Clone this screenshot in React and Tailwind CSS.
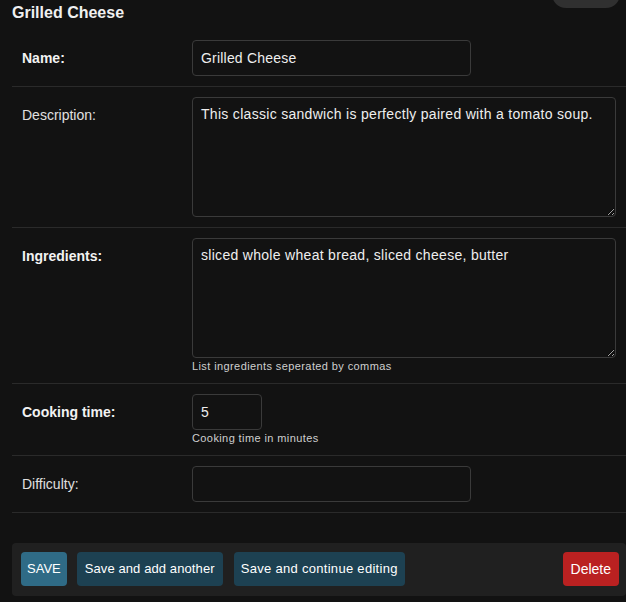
import React from "react";

const font = { fontFamily: '"Liberation Sans", Arial, sans-serif' };

function Row({ label, bold, children, help }) {
  return (
    <div className="flex items-start border-b border-[#2a2a2a] pl-[10px] pr-[10px] pt-[10px] pb-[10px]">
      <label
        className={`w-[170px] shrink-0 h-[36px] leading-[37px] text-[14px] ${
          bold ? "font-bold text-[#f2f2f2]" : "text-[#e0e0e0]"
        }`}
      >
        {label}
      </label>
      <div className="flex flex-col">
        {children}
        {help && (
          <div className="mt-[2px] text-[11px] leading-[13px] tracking-[0.4px] text-[#cfcfcf]">
            {help}
          </div>
        )}
      </div>
    </div>
  );
}

export default function App() {
  return (
    <div
      className="relative h-[602px] w-[626px] overflow-hidden bg-[#121212] text-[#eeeeee] [color-scheme:dark]"
      style={font}
    >
      {/* object tools pill, cut off at the top */}
      <div className="absolute right-[6px] top-[-22px] h-[30px] w-[68px] rounded-[14px] bg-[#303030]" />

      <div className="pl-[12px]">
        <h2 className="pt-[3px] text-[16px] leading-[20px] font-bold text-[#f0f0f0]">
          Grilled Cheese
        </h2>

        <div className="mt-[7px]">
          <Row label="Name:" bold>
            <input
              readOnly
              value="Grilled Cheese"
              className="h-[36px] w-[279px] rounded-[4px] border border-[#3a3a3a] bg-[#121212] px-[8px] text-[14px] tracking-[0.2px] text-[#eeeeee] outline-none"
            />
          </Row>
          <Row label="Description:">
            <textarea
              readOnly
              value="This classic sandwich is perfectly paired with a tomato soup."
              className="h-[120px] w-[424px] rounded-[4px] border border-[#3a3a3a] bg-[#121212] px-[8px] py-[7px] text-[14px] leading-[18px] tracking-[0.3px] text-[#eeeeee] outline-none"
            />
          </Row>
          <Row label="Ingredients:" bold help="List ingredients seperated by commas">
            <textarea
              readOnly
              value="sliced whole wheat bread, sliced cheese, butter"
              className="h-[120px] w-[424px] rounded-[4px] border border-[#3a3a3a] bg-[#121212] px-[8px] py-[7px] text-[14px] leading-[18px] tracking-[0.3px] text-[#eeeeee] outline-none"
            />
          </Row>
          <Row label="Cooking time:" bold help="Cooking time in minutes">
            <input
              readOnly
              value="5"
              className="h-[36px] w-[70px] rounded-[4px] border border-[#3a3a3a] bg-[#121212] px-[8px] text-[14px] text-[#eeeeee] outline-none"
            />
          </Row>
          <Row label="Difficulty:">
            <input
              readOnly
              value=""
              className="h-[36px] w-[279px] rounded-[4px] border border-[#3a3a3a] bg-[#121212] px-[8px] text-[14px] text-[#eeeeee] outline-none"
            />
          </Row>
        </div>

        <div className="mt-[30px] flex items-center gap-[10px] rounded-[4px] bg-[#202020] pl-[9px] pr-[7px] pt-[9px] pb-[10px]">
          <button className="h-[34px] rounded-[4px] bg-[#2f6b86] px-[6px] text-[13px] text-white">
            SAVE
          </button>
          <button className="h-[34px] rounded-[4px] bg-[#1d4152] px-[8px] text-[13px] tracking-[0.1px] text-white">
            Save and add another
          </button>
          <button className="ml-[1px] h-[34px] rounded-[4px] bg-[#1d4152] px-[7px] text-[13px] tracking-[0.3px] text-white">
            Save and continue editing
          </button>
          <button className="ml-auto h-[34px] rounded-[4px] bg-[#ba2121] px-[8px] text-[14px] text-white">
            Delete
          </button>
        </div>
      </div>
    </div>
  );
}
